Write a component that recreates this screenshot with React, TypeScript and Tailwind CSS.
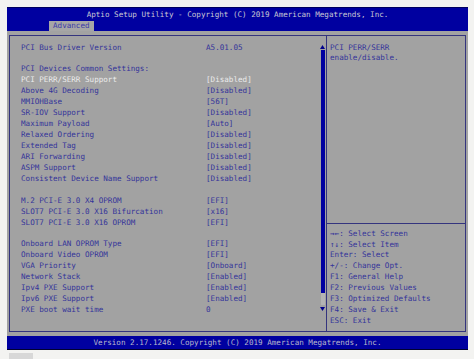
import React from "react";

type Row = { label?: string; value?: string; sel?: boolean; plain?: boolean };

const rows: Row[] = [
  { label: "PCI Bus Driver Version", value: "A5.01.05", plain: true },
  {},
  { label: "PCI Devices Common Settings:", plain: true },
  { label: "PCI PERR/SERR Support", value: "[Disabled]", sel: true },
  { label: "Above 4G Decoding", value: "[Disabled]" },
  { label: "MMIOHBase", value: "[56T]" },
  { label: "SR-IOV Support", value: "[Disabled]" },
  { label: "Maximum Payload", value: "[Auto]" },
  { label: "Relaxed Ordering", value: "[Disabled]" },
  { label: "Extended Tag", value: "[Disabled]" },
  { label: "ARI Forwarding", value: "[Disabled]" },
  { label: "ASPM Support", value: "[Disabled]" },
  { label: "Consistent Device Name Support", value: "[Disabled]" },
  {},
  { label: "M.2 PCI-E 3.0 X4 OPROM", value: "[EFI]" },
  { label: "SLOT7 PCI-E 3.0 X16 Bifurcation", value: "[x16]" },
  { label: "SLOT7 PCI-E 3.0 X16 OPROM", value: "[EFI]" },
  {},
  { label: "Onboard LAN OPROM Type", value: "[EFI]" },
  { label: "Onboard Video OPROM", value: "[EFI]" },
  { label: "VGA Priority", value: "[Onboard]" },
  { label: "Network Stack", value: "[Enabled]" },
  { label: "Ipv4 PXE Support", value: "[Enabled]" },
  { label: "Ipv6 PXE Support", value: "[Enabled]" },
  { label: "PXE boot wait time", value: "0", plain: true },
];

const keys = [
  "→←: Select Screen",
  "↑↓: Select Item",
  "Enter: Select",
  "+/-: Change Opt.",
  "F1: General Help",
  "F2: Previous Values",
  "F3: Optimized Defaults",
  "F4: Save & Exit",
  "ESC: Exit",
];

export default function App() {
  return (
    <div
      className="w-[474px] h-[359px] overflow-hidden bg-[#f3f3f1] pt-[7px] pl-[7px]"
      style={{ fontFamily: '"DejaVu Sans Mono", "Liberation Mono", monospace' }}
    >
      <div className="w-[461px] h-[343px] flex flex-col text-[7.6px]">
        {/* header */}
        <div className="h-[24px] bg-[#0000a0] flex flex-col border-t border-[#000060]">
          <div className="pt-[2px] h-[12px] leading-[10px] text-center text-[#c8c8d4] whitespace-pre">
            Aptio Setup Utility - Copyright (C) 2019 American Megatrends, Inc.
          </div>
          <div className="mt-auto ml-[42px] w-[45px] h-[10px] bg-[#a6a6a6] text-[#3a3aa8] leading-[10px] pl-[4px]">
            Advanced
          </div>
        </div>
        {/* body */}
        <div className="flex-1 bg-[#a2a2a2] pt-[4px] px-[2px] pb-[4px]">
          <div className="h-full border border-[#34347e] flex">
            {/* left panel */}
            <div className="w-[310px] pl-[11px] pt-[6.5px]">
              {rows.map((r, i) => (
                <div key={i} className="h-[10.94px] leading-[10.94px] flex whitespace-pre">
                  <div
                    className={`w-[185px] ${
                      r.sel ? "text-[#ececec]" : "text-[#34349a]"
                    }`}
                  >
                    {r.label ?? ""}
                  </div>
                  <div className={r.sel ? "text-[#ececec]" : "text-[#34349a]"}>
                    {r.value ?? ""}
                  </div>
                </div>
              ))}
            </div>
            {/* scrollbar */}
            <div className="w-[5px] flex flex-col items-center pt-[8px]">
              <svg width="5" height="6" viewBox="0 0 5 6">
                <polygon points="2.5,1 5,5 0,5" fill="#00008c" />
              </svg>
              <div className="w-[4px] h-[243px] bg-[#0000a0]" />
              <div className="w-[4px] h-[12px] bg-[#b4b4b4]" />
              <svg width="5" height="6" viewBox="0 0 5 6" className="mt-[1px]">
                <polygon points="0,1 5,1 2.5,5" fill="#00008c" />
              </svg>
            </div>
            <div className="w-[1px]" />
            {/* right panel */}
            <div className="flex-1 border-l border-[#34347e] flex flex-col">
              <div className="flex-1 pl-[3px] pt-[6.5px] text-[#34349a] whitespace-pre">
                <div className="h-[10.94px] leading-[10.94px]">PCI PERR/SERR</div>
                <div className="h-[10.94px] leading-[10.94px]">enable/disable.</div>
              </div>
              <div className="border-t border-[#34347e] pt-[4.5px] pb-[4px] pl-[3px] text-[#34349a] whitespace-pre">
                {keys.map((k) => (
                  <div key={k} className="h-[10.94px] leading-[10.94px]">
                    {k}
                  </div>
                ))}
              </div>
            </div>
          </div>
        </div>
        {/* footer */}
        <div className="h-[14px] bg-[#0000a0] border-b border-[#000030] text-center leading-[13px] text-[#b8b8cc] whitespace-pre">
          Version 2.17.1246. Copyright (C) 2019 American Megatrends, Inc.
        </div>
      </div>
      <div className="mt-[3px] ml-[2px] w-[24px] h-[6px] bg-[#d8d8d8]" />
    </div>
  );
}
